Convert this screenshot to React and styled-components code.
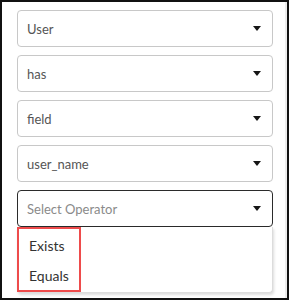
import React from "react";
import styled, { createGlobalStyle } from "styled-components";

const GlobalStyle = createGlobalStyle`
  html, body {
    margin: 0;
    padding: 0;
    background: #fff;
  }
  body {
    font-family: Lato, "Open Sans", sans-serif;
  }
`;

const Frame = styled.div`
  width: 289px;
  height: 300px;
  box-sizing: border-box;
  border: 2px solid #111;
  background: #fff;
  display: flex;
`;

const Panel = styled.div`
  flex: 1;
  border-right: 2px solid #ececec;
  padding: 8px 12px 0 15px;
  display: flex;
  flex-direction: column;
  gap: 8px;
`;

const SelectBox = styled.div`
  height: 37px;
  box-sizing: border-box;
  border: ${(p) => (p.$focused ? "1.5px solid #2b2b2b" : "1px solid #c8c8c8")};
  border-radius: 4px;
  display: flex;
  align-items: center;
  justify-content: space-between;
  padding: 0 10px 0 9px;
  font-size: 13px;
  color: ${(p) => (p.$placeholder ? "#8a8a8a" : "#555")};
`;

const Caret = styled.span`
  width: 0;
  height: 0;
  border-left: 4.5px solid transparent;
  border-right: 4.5px solid transparent;
  border-top: 5px solid #161616;
  margin-right: 1px;
`;

const Field = styled.div`
  display: flex;
  flex-direction: column;
`;

const Menu = styled.div`
  border: 1px solid #dcdcdc;
  border-top: none;
  border-radius: 0 0 4px 4px;
  box-shadow: 1px 2px 3px rgba(0, 0, 0, 0.14);
  background: #fff;
  height: 66px;
  box-sizing: border-box;
`;

const Highlight = styled.div`
  width: 64px;
  height: 65px;
  box-sizing: border-box;
  border: 2px solid #ee4b4b;
  margin-left: -1px;
  padding-top: 1px;
  display: flex;
  flex-direction: column;
`;

const Option = styled.div`
  height: 31px;
  display: flex;
  align-items: center;
  padding-left: 10px;
  font-size: 14px;
  color: #333;
`;

const Select = ({ value, placeholder, focused }) => (
  <SelectBox $focused={focused} $placeholder={!value}>
    <span>{value || placeholder}</span>
    <Caret />
  </SelectBox>
);

export default function App() {
  return (
    <>
      <GlobalStyle />
      <Frame>
        <Panel>
          <Select value="User" />
          <Select value="has" />
          <Select value="field" />
          <Select value="user_name" />
          <Field>
            <Select placeholder="Select Operator" focused />
            <Menu>
              <Highlight>
                <Option>Exists</Option>
                <Option>Equals</Option>
              </Highlight>
            </Menu>
          </Field>
        </Panel>
      </Frame>
    </>
  );
}
